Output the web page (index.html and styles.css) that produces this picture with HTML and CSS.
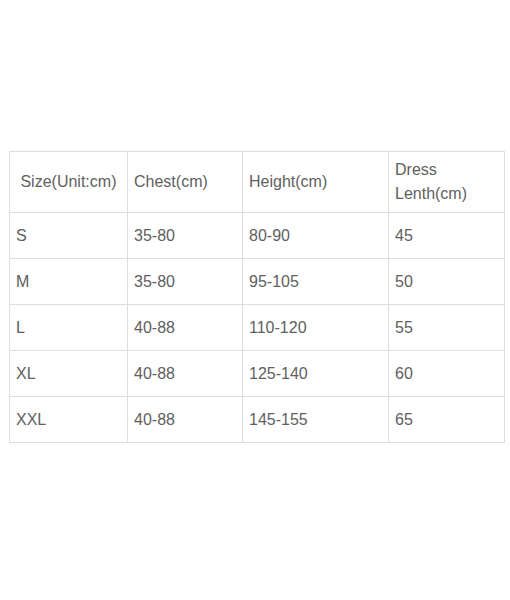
FILE: index.html
```html
<!DOCTYPE html>
<html>
<head>
<meta charset="utf-8">
<link rel="stylesheet" href="styles.css">
</head>
<body>
<div class="wrap">
<table class="size-table">
<colgroup>
<col class="c1"><col class="c2"><col class="c3"><col class="c4">
</colgroup>
<tr class="head"><td>&nbsp;Size(Unit:cm)</td><td>Chest(cm)</td><td>Height(cm)</td><td>Dress Lenth(cm)</td></tr>
<tr><td>S</td><td>35-80</td><td>80-90</td><td>45</td></tr>
<tr><td>M</td><td>35-80</td><td>95-105</td><td>50</td></tr>
<tr><td>L</td><td>40-88</td><td>110-120</td><td>55</td></tr>
<tr><td>XL</td><td>40-88</td><td>125-140</td><td>60</td></tr>
<tr><td>XXL</td><td>40-88</td><td>145-155</td><td>65</td></tr>
</table>
</div>
</body>
</html>
```
FILE: styles.css
```css
html, body {
  margin: 0;
  padding: 0;
  background: #fff;
}
.wrap {
  padding: 151px 0 0 9px;
}
.size-table {
  border-collapse: collapse;
  table-layout: fixed;
  width: 495px;
  font-family: "Liberation Sans", Arial, sans-serif;
  font-size: 16px;
  line-height: 24px;
  color: #606060;
}
.c1 { width: 118px; }
.c2 { width: 115px; }
.c3 { width: 146px; }
.c4 { width: 116px; }
.size-table td {
  border: 1px solid #dedede;
  padding: 0 6px;
  height: 45px;
  vertical-align: middle;
}
.size-table .head td {
  height: 60px;
}
```
